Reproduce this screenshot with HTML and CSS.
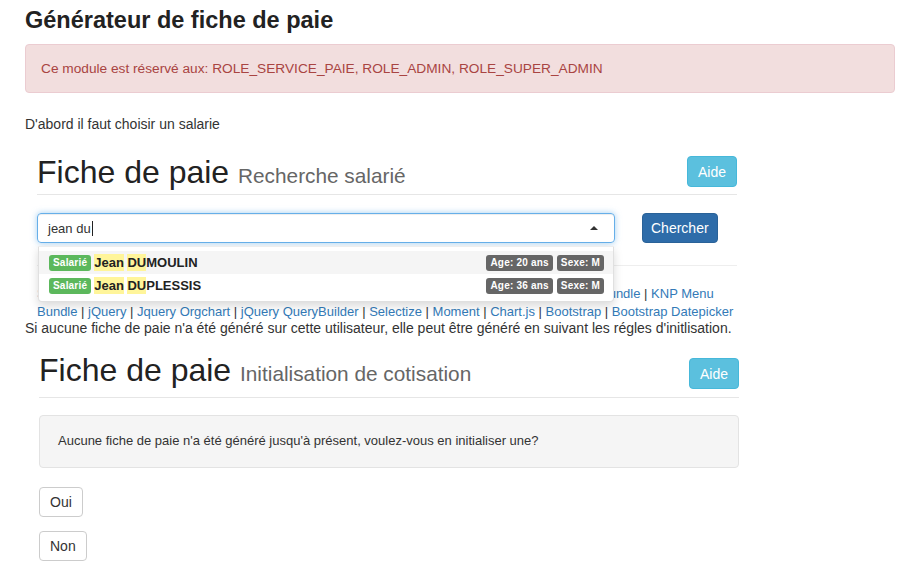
FILE: index.html
```html
<!DOCTYPE html>
<html lang="fr">
<head>
<meta charset="utf-8">
<title>Générateur de fiche de paie</title>
<link rel="stylesheet" href="styles.css">
</head>
<body>
<div class="page">
  <h1 class="title">Générateur de fiche de paie</h1>
  <div class="alert">Ce module est réservé aux: ROLE_SERVICE_PAIE, ROLE_ADMIN, ROLE_SUPER_ADMIN</div>
  <p class="intro">D'abord il faut choisir un salarie</p>

  <section class="panel panel-search">
    <div class="page-header">
      <h2 class="ph-title">Fiche de paie <small>Recherche salarié</small></h2>
      <button class="btn btn-info">Aide</button>
    </div>
    <div class="search-row">
      <div class="select">
        <div class="select-input">
          <span class="typed">jean du</span><span class="cursor"></span>
          <span class="caret"></span>
        </div>
        <div class="dropdown">
          <div class="option active">
            <span class="label label-green">Salarié</span>
            <span class="name"><mark>Jean</mark> <mark>DU</mark>MOULIN</span>
            <span class="badges"><span class="label label-gray">Age: 20 ans</span><span class="label label-gray">Sexe: M</span></span>
          </div>
          <div class="option">
            <span class="label label-green">Salarié</span>
            <span class="name"><mark>Jean</mark> <mark>DU</mark>PLESSIS</span>
            <span class="badges"><span class="label label-gray">Age: 36 ans</span><span class="label label-gray">Sexe: M</span></span>
          </div>
        </div>
      </div>
      <button class="btn btn-primary">Chercher</button>
    </div>
    <hr class="sep">
    <div class="credits">
      <a href="#">Symfony</a> | <a href="#">Doctrine</a> | <a href="#">Twig</a> | <a href="#">Swiftmailer</a> | <a href="#">Monolog</a> | <a href="#">PHPExcel</a> | <a href="#">FOS User Bundle</a> | <a href="#">KNP Paginator Bundle</a> | <a href="#">KNP Menu<br>Bundle</a> | <a href="#">jQuery</a> | <a href="#">Jquery Orgchart</a> | <a href="#">jQuery QueryBuilder</a> | <a href="#">Selectize</a> | <a href="#">Moment</a> | <a href="#">Chart.js</a> | <a href="#">Bootstrap</a> | <a href="#">Bootstrap Datepicker</a>
    </div>
  </section>

  <p class="note">Si aucune fiche de paie n'a été généré sur cette utilisateur, elle peut être généré en suivant les régles d'initlisation.</p>

  <section class="panel panel-init">
    <div class="page-header page-header-init">
      <h2 class="ph-title">Fiche de paie <small>Initialisation de cotisation</small></h2>
      <button class="btn btn-info btn-low">Aide</button>
    </div>
    <div class="well">Aucune fiche de paie n'a été généré jusqu'à présent, voulez-vous en initialiser une?</div>
    <div class="choices">
      <button class="btn btn-default">Oui</button>
      <button class="btn btn-default">Non</button>
    </div>
  </section>
</div>
</body>
</html>
```
FILE: styles.css
```css
html, body {
  margin: 0;
  padding: 0;
  background: #fff;
}
body {
  font-family: "Liberation Sans", Arial, Helvetica, sans-serif;
  font-size: 14px;
  color: #333;
}
.page {
  padding: 0 24px 0 25px;
}
.title {
  margin: 7px 0 11px;
  font-size: 23.5px;
  line-height: 26px;
  font-weight: bold;
  color: #222;
}
.alert {
  padding: 14px 15px;
  line-height: 19px;
  font-size: 13.7px;
  background: #f2dede;
  border: 1px solid #ebccd1;
  border-radius: 4px;
  color: #a94442;
}
.intro {
  margin: 21px 0 0;
  line-height: 20px;
}
.panel {
  width: 700px;
}
.panel-search {
  margin: 22px 0 0 12px;
}
.panel-init {
  margin: 19px 0 0 14px;
}
.page-header {
  display: flex;
  justify-content: space-between;
  align-items: flex-start;
  padding-bottom: 5px;
  border-bottom: 1px solid #e6e6e6;
}
.page-header-init {
  padding-bottom: 8px;
}
.ph-title {
  margin: 0;
  font-size: 32px;
  line-height: 33px;
  font-weight: normal;
  color: #222;
}
.ph-title small {
  font-size: 65%;
  line-height: 1;
  color: #666;
}
.btn {
  font-family: inherit;
  font-size: 14px;
  line-height: 20px;
  border: 1px solid transparent;
  border-radius: 4px;
  cursor: pointer;
  margin: 0;
}
.btn-info {
  padding: 5px 10px 4px;
  background: #5bc0de;
  border-color: #46b8da;
  color: #fff;
}
.btn-low {
  margin-top: 4px;
}
.btn-primary {
  padding: 4px 8px;
  background: #2e6ca9;
  border-color: #2a6298;
  color: #fff;
}
.btn-default {
  padding: 4px 10px;
  background: #fff;
  border-color: #ccc;
  color: #333;
}
.search-row {
  display: flex;
  align-items: flex-start;
  gap: 27px;
  margin-top: 18px;
}
.select {
  position: relative;
  width: 578px;
}
.select-input {
  box-sizing: border-box;
  height: 30px;
  display: flex;
  align-items: center;
  padding: 0 16px 0 10px;
  border: 1px solid #66afe9;
  border-radius: 4px;
  box-shadow: inset 0 1px 1px rgba(0,0,0,.075), 0 0 6px rgba(102,175,233,.6);
  font-size: 13px;
  color: #333;
}
.cursor {
  width: 1px;
  height: 15px;
  background: #222;
  margin-left: 1px;
}
.caret {
  margin-left: auto;
  width: 0;
  height: 0;
  border-left: 4px solid transparent;
  border-right: 4px solid transparent;
  border-bottom: 4px solid #333;
}
.dropdown {
  position: absolute;
  top: 33px;
  left: 1px;
  right: 1px;
  z-index: 10;
  padding: 4px 0;
  background: #fff;
  border: 1px solid rgba(0,0,0,.12);
  border-top-color: #eee;
  border-radius: 0 0 4px 4px;
  box-shadow: 0 4px 10px rgba(0,0,0,.15);
}
.option {
  display: flex;
  align-items: center;
  height: 23px;
  padding: 0 9px 0 10px;
}
.option.active {
  background: #f5f5f5;
}
.label {
  display: inline-block;
  height: 16px;
  line-height: 16px;
  padding: 0 4px;
  border-radius: 3px;
  font-size: 10px;
  font-weight: bold;
  letter-spacing: 0.2px;
  color: #fff;
}
.label-green {
  background: #5cb85c;
}
.label-gray {
  background: #666;
}
.name {
  margin-left: 3px;
  font-size: 13px;
  font-weight: bold;
  color: #222;
}
.name mark {
  background: #fff59a;
  color: inherit;
  padding: 1px 0;
}
.badges {
  margin-left: auto;
  display: flex;
  gap: 4px;
}
.sep {
  margin: 22px 0 0;
  border: 0;
  border-top: 1px solid #eee;
  height: 0;
}
.credits {
  margin-top: 19px;
  font-size: 13px;
  line-height: 18px;
  white-space: nowrap;
  color: #333;
}
.credits a {
  color: #337ab7;
  text-decoration: none;
}
.note {
  margin: 0;
  line-height: 14px;
}
.well {
  margin-top: 17px;
  padding: 17px 18px 19px;
  line-height: 15px;
  font-size: 13px;
  background: #f5f5f5;
  border: 1px solid #e3e3e3;
  border-radius: 4px;
  color: #333;
}
.choices {
  margin-top: 19px;
  display: flex;
  flex-direction: column;
  align-items: flex-start;
  gap: 14px;
}
```
